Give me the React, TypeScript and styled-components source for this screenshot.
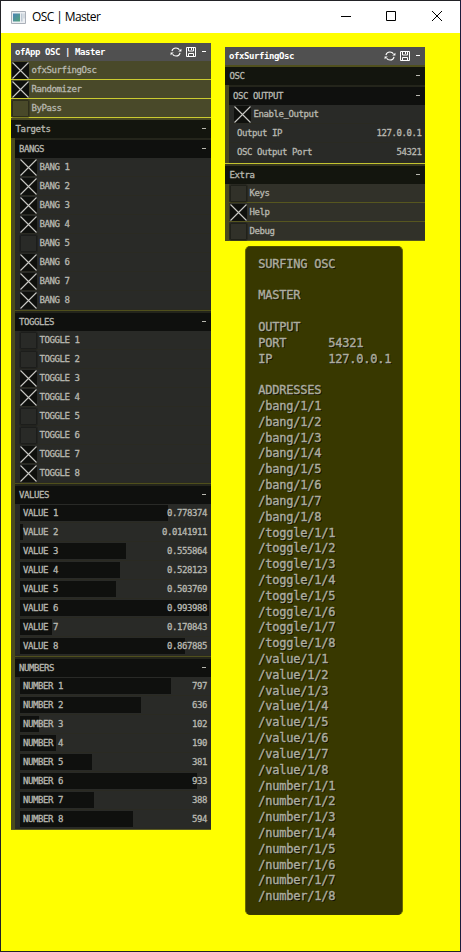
import React from "react";
import styled, { createGlobalStyle } from "styled-components";

const Global = createGlobalStyle`
  html, body { margin: 0; padding: 0; }
  body { background: #ff0; overflow: hidden; }
  * { box-sizing: border-box; }
`;

const Window = styled.div`
  width: 461px;
  height: 952px;
  display: flex;
  flex-direction: column;
  background: #ff0;
  border: 1px solid #222226;
  border-right-color: #1c1c3c;
`;

const TitleBar = styled.header`
  height: 32px;
  flex: none;
  display: flex;
  align-items: center;
  background: #fff;
  padding-left: 10px;
`;

const Title = styled.h1`
  flex: 1;
  margin: 0 0 0 6px;
  padding-bottom: 1px;
  font: 400 12px "Open Sans", sans-serif;
  letter-spacing: -0.6px;
  color: #000;
  white-space: pre;
`;

const WindowButton = styled.span<{ $w?: number }>`
  width: ${(p) => p.$w ?? 46}px;
  height: 30px;
  display: flex;
  align-items: center;
  justify-content: center;
  padding-bottom: 2px;
`;

const Canvas = styled.main`
  flex: 1;
  display: flex;
  align-items: flex-start;
  padding: 10px 0 0 10px;
  gap: 14px;
`;

const RightColumn = styled.div`
  padding-top: 4px;
`;

const Panel = styled.section`
  width: 200px;
  font: 9px/18px "DejaVu Sans Mono", "Liberation Mono", monospace;
  letter-spacing: -0.42px;
  color: #b8b8b0;
  -webkit-text-stroke: 0.3px;
  background: #4b4b1d;
  white-space: pre;
`;

const PanelHeader = styled.div`
  height: 18px;
  display: flex;
  align-items: center;
  padding: 0 5px 0 4px;
  background: #505050;
  color: #fff;
  font-weight: 700;
  -webkit-text-stroke: 0;
`;

const Grow = styled.span`
  flex: 1;
`;

const Dash = styled.i`
  width: 4px;
  height: 1px;
  margin-bottom: 1px;
  background: currentColor;
`;

const Icon = styled.svg`
  width: 12px;
  height: 10px;
  margin-right: 3px;
  flex: none;
`;

const SaveIcon = styled(Icon)`
  margin-right: 5px;
`;

const SectionHeader = styled.div<{ $nested?: boolean }>`
  height: 18px;
  display: flex;
  align-items: center;
  justify-content: space-between;
  padding: 0 5px 0 ${(p) => (p.$nested ? 4 : 4.5)}px;
  background: ${(p) => (p.$nested ? "#0f100e" : "#13150e")};
`;

const Gap = styled.div<{ $color: string; $h?: number }>`
  height: ${(p) => p.$h ?? 2}px;
  background: ${(p) => p.$color};
`;

const Indent = styled.div`
  padding-left: 4px;
`;

type Tone = "olive" | "dark" | "mid";
const tones: Record<Tone, { bg: string; line: string; box: string }> = {
  olive: { bg: "#494929", line: "#cbcb30", box: "#2e2e1b" },
  dark: { bg: "#292a27", line: "#2a2a22", box: "#1c1d1b" },
  mid: { bg: "#313129", line: "#56561f", box: "#20211a" },
};

const Row = styled.div<{ $tone: Tone; $pad: number }>`
  height: 19px;
  display: flex;
  align-items: center;
  padding-left: ${(p) => p.$pad}px;
  background: ${(p) => tones[p.$tone].bg};
  border-bottom: 1px solid ${(p) => tones[p.$tone].line};
`;

const Box = styled.span<{ $tone: Tone; $on: boolean }>`
  width: 17px;
  height: 17px;
  flex: none;
  margin-right: 3px;
  display: flex;
  border: ${(p) => (p.$on ? "0" : `1px solid ${tones[p.$tone].box}`)};
  box-shadow: ${(p) => (p.$on ? "none" : `0 0 0 0.5px ${tones[p.$tone].box}`)};
  border-radius: 1px;
  background: ${(p) => (p.$on ? "#0f100d" : "transparent")};
`;

const ValueRow = styled.div`
  height: 19px;
  padding: 1px 1px 1px 5px;
  background: #292a27;
  border-bottom: 1px solid #2a2a22;
`;

const Track = styled.div`
  position: relative;
  height: 16px;
  display: flex;
  align-items: center;
  justify-content: space-between;
  padding: 0 3px 0 3px;
`;

const Fill = styled.span`
  position: absolute;
  inset: 0 auto 0 0;
  background: #0f100e;
`;

const Over = styled.span`
  position: relative;
`;

const Field = styled(Row)`
  justify-content: space-between;
  padding-right: 3.5px;
`;

const Help = styled.pre`
  width: 158px;
  height: 669px;
  margin: 5px 0 0 20.4px;
  padding: 9.7px 0 0 11.8px;
  border: 1px solid #6a6a00;
  border-top-color: #505000;
  border-bottom-color: #3c3c00;
  border-radius: 5px;
  background: #383800;
  color: #adad9f;
  font: 12px/15.82px "DejaVu Sans Mono", "Liberation Mono", monospace;
  letter-spacing: -0.225px;
  -webkit-text-stroke: 0.35px #adad9f;
  text-shadow: 1px 1px 0 #111108;
`;

const Check = ({ label, on, tone, pad }: { label: string; on: boolean; tone: Tone; pad: number }) => (
  <Row $tone={tone} $pad={pad}>
    <Box $tone={tone} $on={on}>
      {on && (
        <svg width="17" height="17" viewBox="0 0 17 17">
          <path d="M.5.5l16 16M16.5.5l-16 16" stroke="#c9c9c4" strokeWidth="1.1" />
        </svg>
      )}
    </Box>
    {label}
  </Row>
);

const Slider = ({ label, value, max }: { label: string; value: number; max: number }) => (
  <ValueRow>
    <Track>
      <Fill style={{ width: `${(value / max) * 100}%` }} />
      <Over>{label}</Over>
      <Over>{value}</Over>
    </Track>
  </ValueRow>
);

const Header = ({ title }: { title: string }) => (
  <PanelHeader>
    {title}
    <Grow />
    <Icon viewBox="0 0 12 10" fill="none" stroke="#fff" strokeWidth="1.2">
      <path d="M2 4.2C2.4 2.1 4 1 6 1c1.6 0 2.7.7 3.4 1.8M10 5.8C9.6 7.9 8 9 6 9 4.4 9 3.3 8.3 2.6 7.2" />
      <path d="M8.2 4.6h3.2V1.8zM3.8 5.400H.6v2.800z" fill="#fff" stroke="none" />
    </Icon>
    <SaveIcon viewBox="0 0 12 10" fill="none" stroke="#fff">
      <path d="M1.5.5h9v9h-9zM3.5.5v3.500h5V.5M3.5 9.500v-3h5v3" />
      <path d="M6.5 1v2" />
    </SaveIcon>
    <Dash />
  </PanelHeader>
);

const Section = ({ title, nested }: { title: string; nested?: boolean }) => (
  <SectionHeader $nested={nested}>
    <span>{title}</span>
    <Dash />
  </SectionHeader>
);

const bangs = [true, true, true, true, false, true, true, true];
const toggles = [false, false, true, true, false, false, true, true];
const values = [0.778374, 0.0141911, 0.555864, 0.528123, 0.503769, 0.993988, 0.170843, 0.867885];
const numbers = [797, 636, 102, 190, 381, 933, 388, 594];

const addresses = ["bang", "toggle", "value", "number"].flatMap((kind) =>
  Array.from({ length: 8 }, (_, i) => `/${kind}/1/${i + 1}`)
);
const helpText = [
  "SURFING OSC", "", "MASTER", "", "OUTPUT",
  "PORT      54321", "IP        127.0.0.1", "", "ADDRESSES",
  ...addresses,
].join("\n");

const Divider = () => (
  <>
    <Gap $h={1} $color="#4f4f1c" />
    <Gap $color="#24251b" />
  </>
);

export default function App() {
  return (
    <Window>
      <Global />
      <TitleBar>
        <svg width="15" height="13" viewBox="0 0 15 13">
          <defs>
            <linearGradient id="screen" x1="0" y1="0" x2="1" y2="1">
              <stop offset="0" stopColor="#4a83b5" />
              <stop offset="1" stopColor="#55a57c" />
            </linearGradient>
          </defs>
          <path d="M.5.5h14v12H.5z" fill="#eceff2" stroke="#aab0b8" />
          <path d="M2 2.5h7v8H2z" fill="url(#screen)" />
          <path d="M10 2.5h1.5v8H10zM12.5 2.5h1v5h-1z" fill="#bcc8d2" />
        </svg>
        <Title>OSC | Master</Title>
        <WindowButton $w={44}>
          <svg width="10" height="10"><path d="M0 5.5h10" stroke="#000" /></svg>
        </WindowButton>
        <WindowButton>
          <svg width="10" height="10"><path d="M.5.5h9v9h-9z" fill="none" stroke="#000" /></svg>
        </WindowButton>
        <WindowButton>
          <svg width="10" height="10"><path d="M0 0l10 10M10 0L0 10" stroke="#000" /></svg>
        </WindowButton>
      </TitleBar>
      <Canvas>
        <Panel>
          <Header title="ofApp OSC | Master" />
          <Check label="ofxSurfingOsc" on tone="olive" pad={0.5} />
          <Check label="Randomizer" on tone="olive" pad={0.5} />
          <Check label="ByPass" on={false} tone="olive" pad={0.5} />
          <Gap $color="#4a4a22" />
          <Section title="Targets" />
          <Indent>
            <Gap $color="#24251b" />
            <Section title="BANGS" nested />
            {bangs.map((on, i) => (
              <Check key={i} label={`BANG ${i + 1}`} on={on} tone="dark" pad={4.5} />
            ))}
            <Divider />
            <Section title="TOGGLES" nested />
            {toggles.map((on, i) => (
              <Check key={i} label={`TOGGLE ${i + 1}`} on={on} tone="dark" pad={4.5} />
            ))}
            <Divider />
            <Section title="VALUES" nested />
            {values.map((v, i) => (
              <Slider key={i} label={`VALUE ${i + 1}`} value={v} max={1} />
            ))}
            <Divider />
            <Section title="NUMBERS" nested />
            {numbers.map((v, i) => (
              <Slider key={i} label={`NUMBER ${i + 1}`} value={v} max={1000} />
            ))}
          </Indent>
          <Gap $h={1} $color="#5a5a20" />
        </Panel>
        <RightColumn>
          <Panel>
            <Header title="ofxSurfingOsc" />
            <Gap $color="#50501e" />
            <Section title="OSC" />
            <Indent>
              <Gap $color="#24251b" />
              <Section title="OSC OUTPUT" nested />
              <Check label="Enable_Output" on tone="dark" pad={4.5} />
              <Field $tone="dark" $pad={8}>
                <span>Output IP</span>
                <span>127.0.0.1</span>
              </Field>
              <Field $tone="dark" $pad={8}>
                <span>OSC Output Port</span>
                <span>54321</span>
              </Field>
              <Gap $h={1} $color="#292a27" />
            </Indent>
            <Gap $h={1} $color="#c4c430" />
            <Gap $color="#38381e" />
            <Section title="Extra" />
            <Indent>
              <Check label="Keys" on={false} tone="mid" pad={0.5} />
              <Check label="Help" on tone="mid" pad={0.5} />
              <Check label="Debug" on={false} tone="mid" pad={0.5} />
            </Indent>
          </Panel>
          <Help>{helpText}</Help>
        </RightColumn>
      </Canvas>
    </Window>
  );
}
